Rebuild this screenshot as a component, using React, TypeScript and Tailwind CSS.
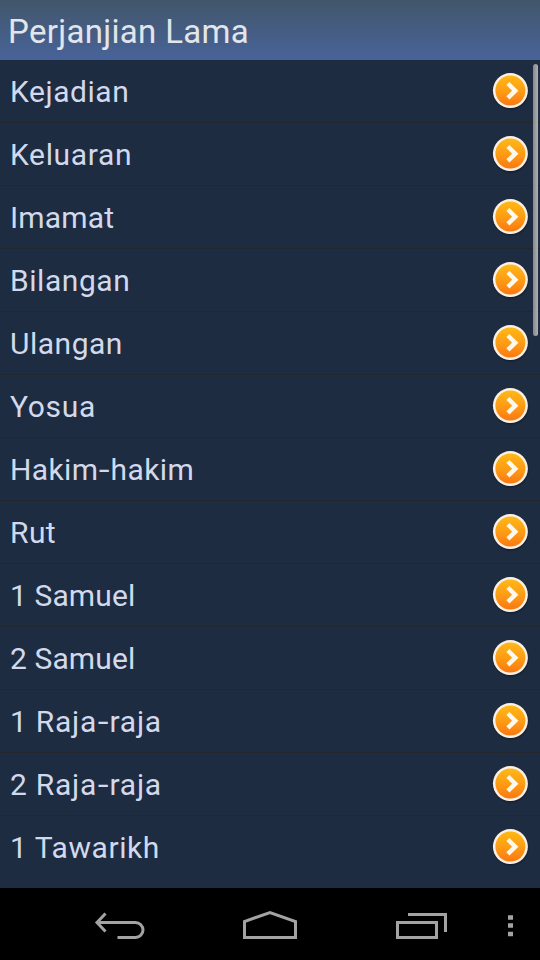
import React from 'react';

interface Book {
  id: number;
  name: string;
  tracking: string;
}

const books: Book[] = [
  { id: 1, name: 'Kejadian', tracking: 'tracking-[0.55px]' },
  { id: 2, name: 'Keluaran', tracking: 'tracking-[0.65px]' },
  { id: 3, name: 'Imamat', tracking: 'tracking-[0.15px]' },
  { id: 4, name: 'Bilangan', tracking: 'tracking-[0.55px]' },
  { id: 5, name: 'Ulangan', tracking: 'tracking-[0.5px]' },
  { id: 6, name: 'Yosua', tracking: 'tracking-[0.7px]' },
  { id: 7, name: 'Hakim-hakim', tracking: 'tracking-[0.4px]' },
  { id: 8, name: 'Rut', tracking: 'tracking-[0.4px]' },
  { id: 9, name: '1 Samuel', tracking: 'tracking-[0.1px]' },
  { id: 10, name: '2 Samuel', tracking: 'tracking-[0.1px]' },
  { id: 11, name: '1 Raja-raja', tracking: 'tracking-[0.75px]' },
  { id: 12, name: '2 Raja-raja', tracking: 'tracking-[0.75px]' },
  { id: 13, name: '1 Tawarikh', tracking: 'tracking-[0.55px]' },
];

const ArrowBadge: React.FC = () => (
  <svg width="40" height="40" viewBox="0 0 40 40" className="shrink-0">
    <defs>
      <linearGradient id="badge" x1="0" y1="0" x2="0" y2="1">
        <stop offset="0" stopColor="#ffb818" />
        <stop offset="0.5" stopColor="#fd9d14" />
        <stop offset="1" stopColor="#fa7812" />
      </linearGradient>
      <radialGradient id="shade">
        <stop offset="0.8" stopColor="#0b1420" stopOpacity="0.7" />
        <stop offset="1" stopColor="#0b1420" stopOpacity="0" />
      </radialGradient>
    </defs>
    <circle cx="20.8" cy="21" r="19" fill="url(#shade)" />
    <circle cx="20.4" cy="19.6" r="17.5" fill="#faf0e4" />
    <circle cx="20.4" cy="19.6" r="15" fill="url(#badge)" />
    <path d="M17.9 12.5 L25.3 19.7 L17.9 26.9" fill="none" stroke="#fff8ec" strokeWidth="4.4" />
  </svg>
);

const BookRow: React.FC<{ book: Book }> = ({ book }) => {
  const [first, second] = book.name.split('-');

  return (
    <li className="flex h-[63px] shrink-0 items-center justify-between border-b border-[#23262b] px-2.5 last:border-transparent">
      <span className={`pt-px text-[30px] leading-[62px] text-[#d3d9ec] ${book.tracking}`}>
        {first}
        {second && <span className="mx-[1.7px] inline-block scale-x-130">-</span>}
        {second}
      </span>
      <ArrowBadge />
    </li>
  );
};

const NavigationBar: React.FC = () => (
  <nav className="h-[72px] shrink-0 bg-black">
    <svg width="540" height="72" viewBox="0 0 540 72" fill="none" stroke="#a3a3a3" strokeWidth="3">
      {/* back */}
      <path d="M105.5 25.5 L97 34.5 L105.5 43.5 M97 34.5 H135.5 A7.5 7.5 0 0 1 135.5 49.5 H117.5" />
      {/* home */}
      <path d="M244.5 49.5 V33.5 L270 24.5 L295.5 33.5 V49.5 Z" />
      {/* recent apps */}
      <path d="M397.5 34.5 H436.5 V49.5 H397.5 Z M408 26.5 H445.5 V44" />
      {/* overflow */}
      <path d="M508 29.5 H513 M508 37.5 H513 M508 46 H513" strokeWidth="4.5" />
    </svg>
  </nav>
);

export default function App() {
  return (
    <div className="flex h-[960px] w-[540px] flex-col overflow-hidden bg-black font-['Roboto',sans-serif]">
      <header className="flex h-[60px] shrink-0 items-center bg-linear-to-b from-[#42566a] to-[#48639a] pl-2">
        <h1 className="pt-[3px] text-[33px] leading-[60px] tracking-[0.32px] text-[#e2e6ea]">Perjanjian Lama</h1>
      </header>
      <main className="relative flex-1 overflow-hidden bg-[#1d2c41]">
        <ul className="flex flex-col">
          {books.map((book) => (
            <BookRow key={book.id} book={book} />
          ))}
        </ul>
        <div className="absolute right-[2px] top-1 h-[272px] w-[5px] rounded-full bg-linear-to-r from-[#86888c] to-[#aeb0b2]" />
      </main>
      <NavigationBar />
    </div>
  );
}
